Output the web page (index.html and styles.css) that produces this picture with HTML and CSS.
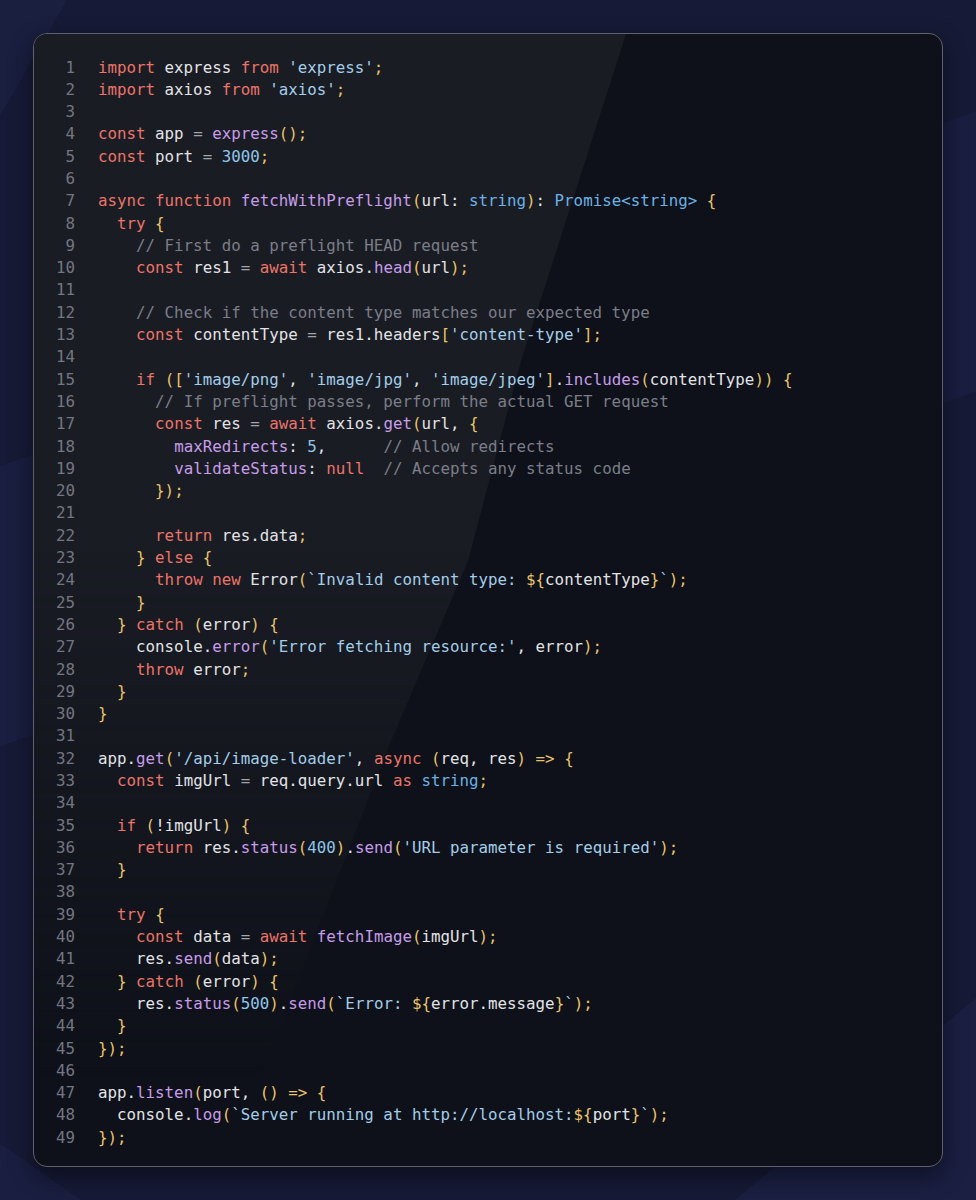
FILE: index.html
```html
<!DOCTYPE html>
<html lang="en">
<head>
<meta charset="utf-8">
<title>Code</title>
<link rel="stylesheet" href="styles.css">
</head>
<body>
<div class="stage">
  <div class="card">
    <div class="glare"></div>
    <div class="code">
<div class="ln"><span class="num">1</span><span class="src"><span class="k">import</span> express <span class="k">from</span> <span class="s">'express'</span><span class="p">;</span></span></div>
<div class="ln"><span class="num">2</span><span class="src"><span class="k">import</span> axios <span class="k">from</span> <span class="s">'axios'</span><span class="p">;</span></span></div>
<div class="ln"><span class="num">3</span><span class="src"></span></div>
<div class="ln"><span class="num">4</span><span class="src"><span class="k">const</span> app <span class="o">=</span> <span class="f">express</span><span class="p">();</span></span></div>
<div class="ln"><span class="num">5</span><span class="src"><span class="k">const</span> port <span class="o">=</span> <span class="n">3000</span><span class="p">;</span></span></div>
<div class="ln"><span class="num">6</span><span class="src"></span></div>
<div class="ln"><span class="num">7</span><span class="src"><span class="k">async</span> <span class="k">function</span> <span class="f">fetchWithPreflight</span><span class="p">(</span>url: <span class="t">string</span><span class="p">)</span>: <span class="t">Promise&lt;string&gt;</span> <span class="p">{</span></span></div>
<div class="ln"><span class="num">8</span><span class="src">  <span class="k">try</span> <span class="p">{</span></span></div>
<div class="ln"><span class="num">9</span><span class="src">    <span class="c">// First do a preflight HEAD request</span></span></div>
<div class="ln"><span class="num">10</span><span class="src">    <span class="k">const</span> res1 <span class="o">=</span> <span class="k">await</span> axios.<span class="f">head</span><span class="p">(</span>url<span class="p">);</span></span></div>
<div class="ln"><span class="num">11</span><span class="src"></span></div>
<div class="ln"><span class="num">12</span><span class="src">    <span class="c">// Check if the content type matches our expected type</span></span></div>
<div class="ln"><span class="num">13</span><span class="src">    <span class="k">const</span> contentType <span class="o">=</span> res1.headers<span class="p">[</span><span class="s">'content-type'</span><span class="p">];</span></span></div>
<div class="ln"><span class="num">14</span><span class="src"></span></div>
<div class="ln"><span class="num">15</span><span class="src">    <span class="k">if</span> <span class="p">([</span><span class="s">'image/png'</span>, <span class="s">'image/jpg'</span>, <span class="s">'image/jpeg'</span><span class="p">]</span>.<span class="f">includes</span><span class="p">(</span>contentType<span class="p">))</span> <span class="p">{</span></span></div>
<div class="ln"><span class="num">16</span><span class="src">      <span class="c">// If preflight passes, perform the actual GET request</span></span></div>
<div class="ln"><span class="num">17</span><span class="src">      <span class="k">const</span> res <span class="o">=</span> <span class="k">await</span> axios.<span class="f">get</span><span class="p">(</span>url, <span class="p">{</span></span></div>
<div class="ln"><span class="num">18</span><span class="src">        <span class="f">maxRedirects</span>: <span class="n">5</span>,      <span class="c">// Allow redirects</span></span></div>
<div class="ln"><span class="num">19</span><span class="src">        <span class="f">validateStatus</span>: <span class="k">null</span>  <span class="c">// Accepts any status code</span></span></div>
<div class="ln"><span class="num">20</span><span class="src">      <span class="p">});</span></span></div>
<div class="ln"><span class="num">21</span><span class="src"></span></div>
<div class="ln"><span class="num">22</span><span class="src">      <span class="k">return</span> res.data<span class="p">;</span></span></div>
<div class="ln"><span class="num">23</span><span class="src">    <span class="p">}</span> <span class="k">else</span> <span class="p">{</span></span></div>
<div class="ln"><span class="num">24</span><span class="src">      <span class="k">throw</span> <span class="k">new</span> Error<span class="p">(</span><span class="s">`Invalid content type: </span><span class="p">${</span>contentType<span class="p">}</span><span class="s">`</span><span class="p">);</span></span></div>
<div class="ln"><span class="num">25</span><span class="src">    <span class="p">}</span></span></div>
<div class="ln"><span class="num">26</span><span class="src">  <span class="p">}</span> <span class="k">catch</span> <span class="p">(</span>error<span class="p">)</span> <span class="p">{</span></span></div>
<div class="ln"><span class="num">27</span><span class="src">    console.<span class="f">error</span><span class="p">(</span><span class="s">'Error fetching resource:'</span>, error<span class="p">);</span></span></div>
<div class="ln"><span class="num">28</span><span class="src">    <span class="k">throw</span> error<span class="p">;</span></span></div>
<div class="ln"><span class="num">29</span><span class="src">  <span class="p">}</span></span></div>
<div class="ln"><span class="num">30</span><span class="src"><span class="p">}</span></span></div>
<div class="ln"><span class="num">31</span><span class="src"></span></div>
<div class="ln"><span class="num">32</span><span class="src">app.<span class="f">get</span><span class="p">(</span><span class="s">'/api/image-loader'</span>, <span class="k">async</span> <span class="p">(</span>req, res<span class="p">)</span> <span class="p">=&gt;</span> <span class="p">{</span></span></div>
<div class="ln"><span class="num">33</span><span class="src">  <span class="k">const</span> imgUrl <span class="o">=</span> req.query.url <span class="k">as</span> <span class="t">string</span><span class="p">;</span></span></div>
<div class="ln"><span class="num">34</span><span class="src"></span></div>
<div class="ln"><span class="num">35</span><span class="src">  <span class="k">if</span> <span class="p">(</span>!imgUrl<span class="p">)</span> <span class="p">{</span></span></div>
<div class="ln"><span class="num">36</span><span class="src">    <span class="k">return</span> res.<span class="f">status</span><span class="p">(</span><span class="n">400</span><span class="p">)</span>.<span class="f">send</span><span class="p">(</span><span class="s">'URL parameter is required'</span><span class="p">);</span></span></div>
<div class="ln"><span class="num">37</span><span class="src">  <span class="p">}</span></span></div>
<div class="ln"><span class="num">38</span><span class="src"></span></div>
<div class="ln"><span class="num">39</span><span class="src">  <span class="k">try</span> <span class="p">{</span></span></div>
<div class="ln"><span class="num">40</span><span class="src">    <span class="k">const</span> data <span class="o">=</span> <span class="k">await</span> <span class="f">fetchImage</span><span class="p">(</span>imgUrl<span class="p">);</span></span></div>
<div class="ln"><span class="num">41</span><span class="src">    res.<span class="f">send</span><span class="p">(</span>data<span class="p">);</span></span></div>
<div class="ln"><span class="num">42</span><span class="src">  <span class="p">}</span> <span class="k">catch</span> <span class="p">(</span>error<span class="p">)</span> <span class="p">{</span></span></div>
<div class="ln"><span class="num">43</span><span class="src">    res.<span class="f">status</span><span class="p">(</span><span class="n">500</span><span class="p">)</span>.<span class="f">send</span><span class="p">(</span><span class="s">`Error: </span><span class="p">${</span>error.message<span class="p">}</span><span class="s">`</span><span class="p">);</span></span></div>
<div class="ln"><span class="num">44</span><span class="src">  <span class="p">}</span></span></div>
<div class="ln"><span class="num">45</span><span class="src"><span class="p">});</span></span></div>
<div class="ln"><span class="num">46</span><span class="src"></span></div>
<div class="ln"><span class="num">47</span><span class="src">app.<span class="f">listen</span><span class="p">(</span>port, <span class="p">()</span> <span class="p">=&gt;</span> <span class="p">{</span></span></div>
<div class="ln"><span class="num">48</span><span class="src">  console.<span class="f">log</span><span class="p">(</span><span class="s">`Server running at http://localhost:</span><span class="p">${</span>port<span class="p">}</span><span class="s">`</span><span class="p">);</span></span></div>
<div class="ln"><span class="num">49</span><span class="src"><span class="p">});</span></span></div>
    </div>
  </div>
</div>
</body>
</html>
```
FILE: styles.css
```css
html, body {
  margin: 0;
  padding: 0;
}
body {
  width: 976px;
  height: 1200px;
  overflow: hidden;
  background-color: #161a36;
  background-image:
    linear-gradient(140deg, transparent 0 90%, #1b1f42 90% 100%),
    linear-gradient(160deg, transparent 0 30%, #1a1e40 30% 48%, transparent 48% 100%),
    linear-gradient(120deg, #1a1e3f 0 4%, transparent 4% 100%),
    linear-gradient(35deg, #1a1e40 0 3%, transparent 3% 100%);
  font-family: "DejaVu Sans Mono", "Liberation Mono", monospace;
}
.stage {
  padding: 33px;
}
.card {
  position: relative;
  width: 910px;
  height: 1134px;
  box-sizing: border-box;
  border: 1.5px solid #5e616a;
  border-radius: 14px;
  background: #0e1119;
  box-shadow: 0 10px 24px rgba(0, 0, 0, 0.45);
  overflow: hidden;
}
.glare {
  position: absolute;
  inset: 0;
  background: #1a1c24;
  clip-path: polygon(0 0, 592px 0, 487px 327px, 434px 527px, 357px 707px, 190px 1134px, 0 1134px);
  -webkit-mask-image: linear-gradient(to bottom, #000 0 45%, transparent 92%);
  mask-image: linear-gradient(to bottom, #000 0 45%, transparent 92%);
}
.code {
  position: relative;
  padding: 22.5px 24px 18px 22px;
  font-size: 15.8px;
  line-height: 22.31px;
  color: #e2e3e6;
}
.ln {
  display: flex;
  height: 22.31px;
}
.num {
  flex: 0 0 19px;
  text-align: right;
  color: #737682;
  margin-right: 23px;
}
.src {
  white-space: pre;
}
.k { color: #ec7468; }
.s { color: #a3cde8; }
.f { color: #c79ce9; }
.n { color: #8ec6ea; }
.t { color: #6ab2e6; }
.p { color: #e9c46b; }
.o { color: #a2a5ad; }
.c { color: #7b7e88; }
```
